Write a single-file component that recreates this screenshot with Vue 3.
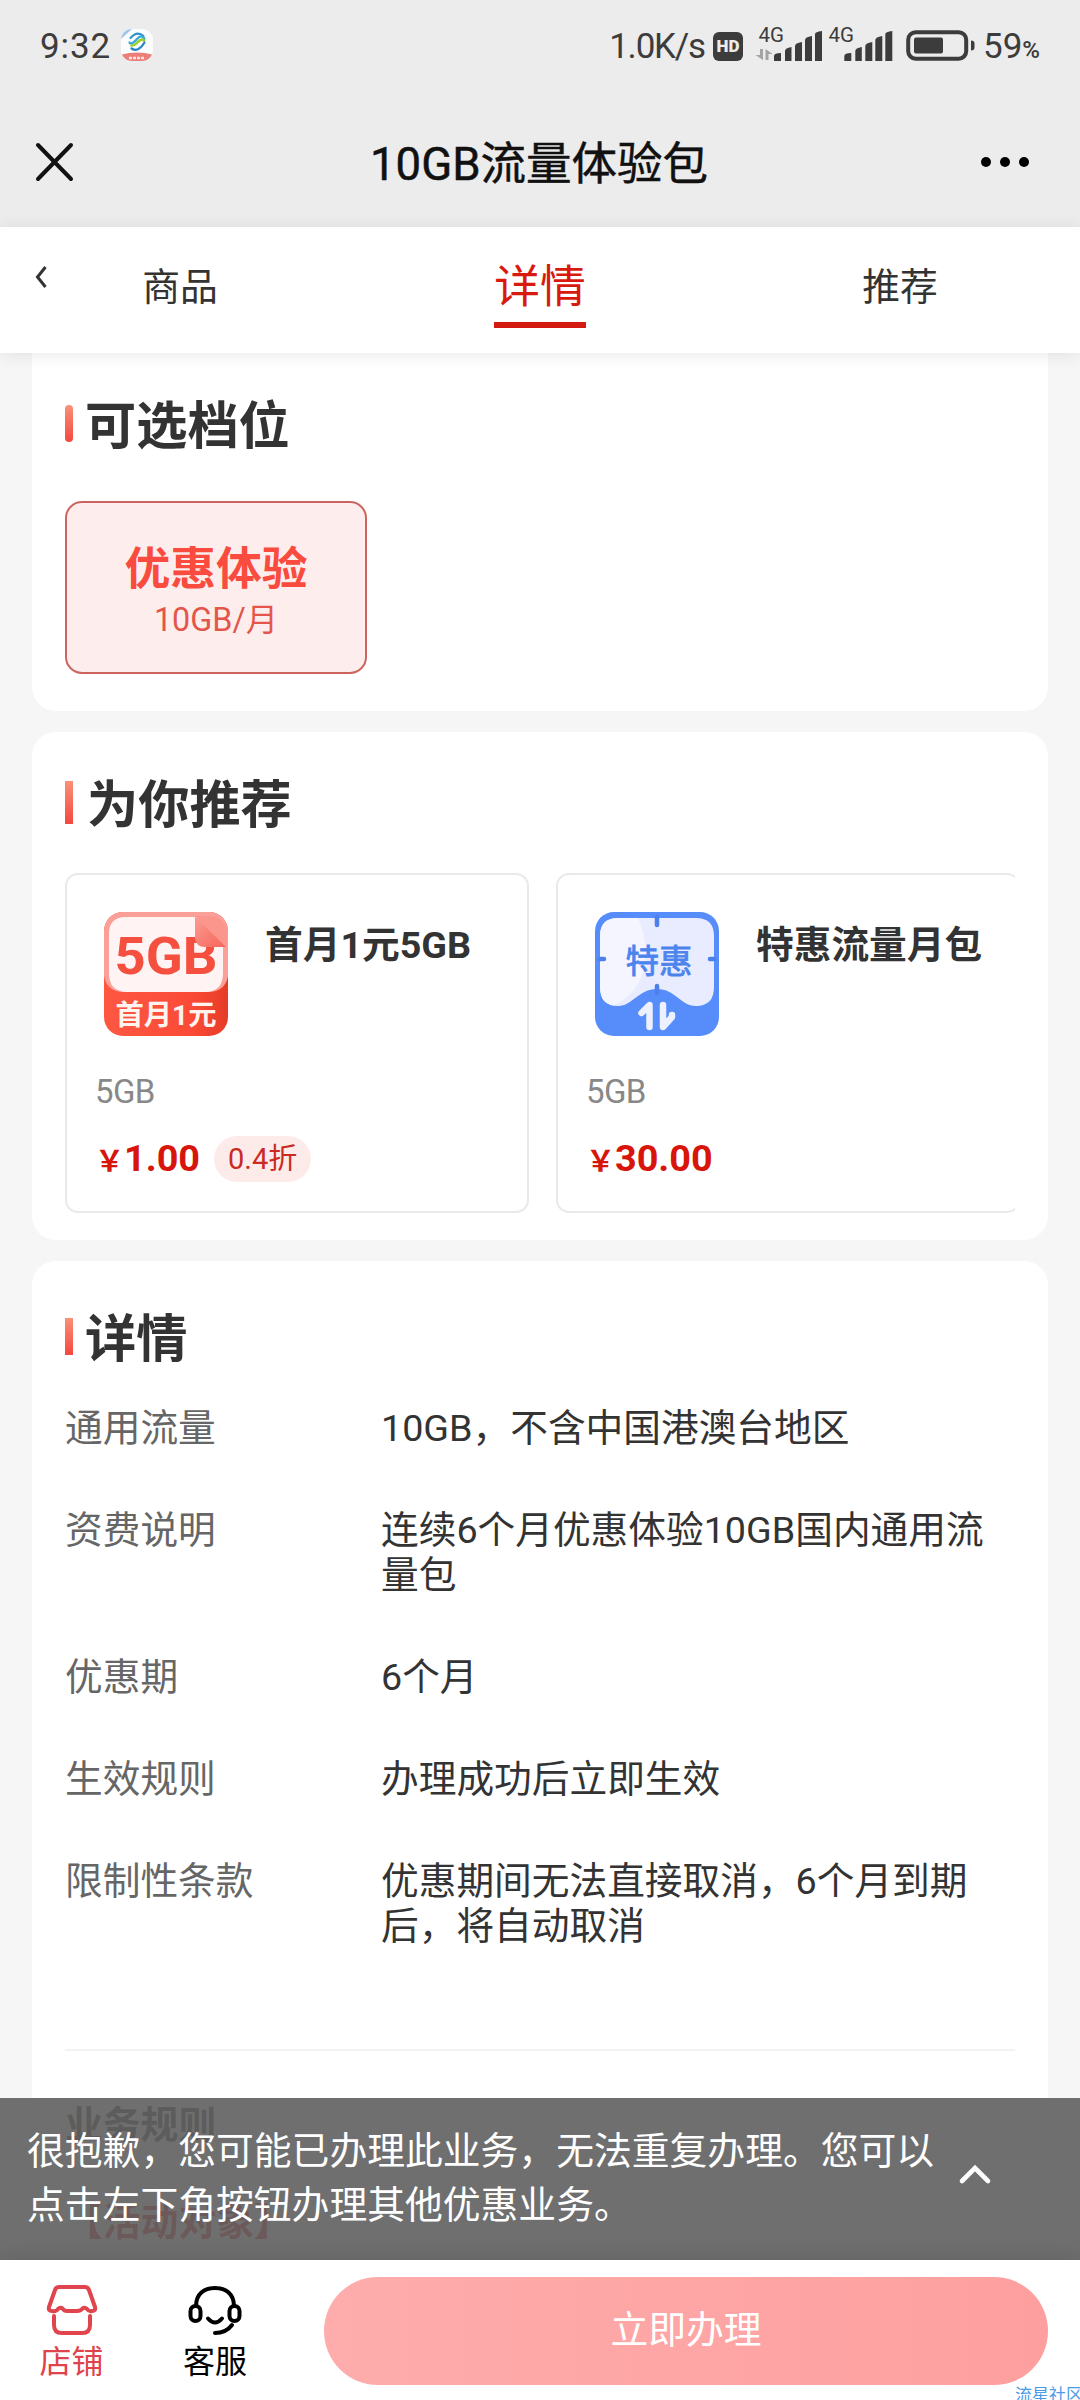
<script setup>
const tabs = [
  { name: '商品', active: false },
  { name: '详情', active: true },
  { name: '推荐', active: false },
]
const details = [
  { label: '通用流量', value: '10GB，不含中国港澳台地区' },
  { label: '资费说明', value: '连续6个月优惠体验10GB国内通用流量包' },
  { label: '优惠期', value: '6个月' },
  { label: '生效规则', value: '办理成功后立即生效' },
  { label: '限制性条款', value: '优惠期间无法直接取消，6个月到期后，将自动取消' },
]
</script>

<template>
  <div class="screen">
    <header class="top">
      <div class="status">
        <div class="status-left">
          <span class="clock">9:32</span>
          <svg class="app-dot" width="34" height="34" viewBox="0 0 34 34">
            <defs><clipPath id="dotClip"><rect x="1" y="1" width="32" height="32" rx="11" /></clipPath></defs>
            <g clip-path="url(#dotClip)">
              <rect width="34" height="34" fill="#fbfcfd" />
              <path d="M0 12 13 0h-6L0 6z" fill="#9cc4ea" />
              <path d="M0 27Q17 22 34 27V34H0z" fill="#ea7f7a" />
              <path d="M9 30h16" stroke="#fbe3e1" stroke-width="2.6" stroke-dasharray="3 1" />
            </g>
            <g fill="none" stroke-linecap="round">
              <path d="M10.500 10Q17 2.500 23.500 8" stroke="#2a93cf" stroke-width="2" />
              <path d="M9.500 14.500C10.500 17 14 14.500 17 11S23 7.500 24.500 11" stroke="#33a9dc" stroke-width="2.200" />
              <path d="M11.500 17.500C15 18 16 15.500 19 13S23 11.500 24 12.500" stroke="#9ccf2c" stroke-width="2.600" />
              <path d="M11.500 20.500Q18 25 24.500 14.500" stroke="#2a86c6" stroke-width="2.200" />
            </g>
          </svg>
        </div>
        <div class="status-right">
          <span class="speed">1.0K/s</span>
          <span class="hd">HD</span>
          <svg class="signals" width="140" height="40" viewBox="754 24 140 40">
            <g fill="#3c3c3c">
              <text x="758.500" y="42" class="net">4G</text>
              <text x="828.500" y="42" class="net">4G</text>
              <path id="bars" d="M774 61v-5q0-3 7-3v8zM785 61v-10q0-3 6.500-4v14zM795 61v-15q0-3 7-4v19zM805 61V40q0-3 7-4v25zM815 61V34q0-2 7-3v30z" />
              <use href="#bars" x="70.300" />
            </g>
            <path d="M763 49v11l-7.500-5h4.500v-6zM765.500 60V49l7 5h-4v6z" fill="#a3a3a3" />
          </svg>
          <svg class="battery" width="70" height="32" viewBox="0 0 70 32">
            <rect x="2.200" y="3.200" width="58" height="26.500" rx="7.500" fill="none" stroke="#3c3c3c" stroke-width="4" />
            <rect x="8" y="8.500" width="29" height="16" rx="2" fill="#3c3c3c" />
            <path d="M65 11.500q3.500 0 3.500 3v4q0 3-3.500 3z" fill="#3c3c3c" />
          </svg>
          <span class="percent">59<small>%</small></span>
        </div>
      </div>
      <div class="titlebar">
        <svg width="40" height="40" viewBox="0 0 40 40" stroke="#111" stroke-width="4" stroke-linecap="round">
          <path d="M3 3 36 37M36 3 3 37" />
        </svg>
        <h1>10GB流量体验包</h1>
        <svg width="50" height="12" viewBox="0 0 50 12"><circle cx="6" cy="6" r="5" /><circle cx="25" cy="6" r="5" /><circle cx="44" cy="6" r="5" /></svg>
      </div>
    </header>

    <nav class="tabs">
      <svg class="back" width="14" height="26" viewBox="0 0 14 26" fill="none" stroke="#333" stroke-width="3">
        <path d="M11.500 3 3.500 13l8 10" />
      </svg>
      <div v-for="t in tabs" :key="t.name" class="tab" :class="{ active: t.active }"><span>{{ t.name }}</span></div>
    </nav>

    <main class="content">
      <section class="card tiers">
        <h2><i class="mark round"></i>可选档位</h2>
        <div class="tier">
          <strong>优惠体验</strong>
          <span>10GB/月</span>
        </div>
      </section>

      <section class="card recommend">
        <h2><i class="mark tall"></i>为你推荐</h2>
        <div class="products">
          <article class="product">
            <div class="product-head">
              <svg width="124" height="124" viewBox="0 0 124 124">
                <defs>
                  <linearGradient id="redBase" x1="0" y1="0" x2="1" y2="0"><stop offset="0" stop-color="#fd5742" /><stop offset="0.700" stop-color="#fb4b37" /><stop offset="1" stop-color="#e63c27" /></linearGradient>
                  <linearGradient id="fold" x1="0" y1="0" x2="1" y2="1"><stop offset="0" stop-color="#fb9c93" /><stop offset="1" stop-color="#f7655a" /></linearGradient>
                  <clipPath id="redClip"><rect width="124" height="124" rx="19" /></clipPath>
                </defs>
                <g clip-path="url(#redClip)">
                  <rect width="124" height="124" fill="url(#redBase)" />
                  <path d="M0 0h124v64q-3 16-20 16H20Q3 80 0 64z" fill="#fba098" />
                  <path d="M5 22Q5 5 22 5h70l27 30v26q0 19-18 19H23Q5 80 5 61z" fill="#fff4f3" />
                </g>
                <text x="62" y="61.500" text-anchor="middle" class="ico-gb" textLength="103" lengthAdjust="spacingAndGlyphs">5GB</text>
                <path d="M91 4v22q1 9 10 9h21z" fill="url(#fold)" />
                <path d="M91 4h17q14 3 15 15v16z" fill="#fb968d" />
                <text x="62" y="113" text-anchor="middle" class="ico-first">首月1元</text>
              </svg>
              <h3>首月1元5GB</h3>
            </div>
            <p class="amount">5GB</p>
            <div class="price"><small>￥</small><b>1.00</b><em>0.4折</em></div>
          </article>
          <article class="product">
            <div class="product-head">
              <svg width="124" height="124" viewBox="0 0 124 124">
                <defs><clipPath id="ticket"><path d="M5 24Q5 6 23 6h78q18 0 18 18v51q0 19-18 19c-16 0-20-17-39-17S38 94 23 94Q5 94 5 75z" /></clipPath></defs>
                <rect width="124" height="124" rx="19" fill="#568dfb" />
                <g clip-path="url(#ticket)">
                  <rect width="124" height="100" fill="#e9ebfe" />
                  <path d="M0 0h40q16 30 8 60T0 100z" fill="#f4f5fe" />
                </g>
                <path d="M62 5v8M62 74v7M5 47h4M115 47h4" stroke="#4c80ea" stroke-width="4.500" stroke-linecap="round" />
                <text x="64" y="61" text-anchor="middle" class="ico-deal">特惠</text>
                <path d="M54.500 115V93l-8 8M68 93v22l9-10v-2" fill="none" stroke="#edf0ff" stroke-width="6.500" stroke-linecap="round" stroke-linejoin="round" />
              </svg>
              <h3>特惠流量月包</h3>
            </div>
            <p class="amount">5GB</p>
            <div class="price"><small>￥</small><b>30.00</b></div>
          </article>
        </div>
      </section>

      <section class="card detail">
        <h2><i class="mark"></i>详情</h2>
        <dl>
          <div v-for="d in details" :key="d.label" class="row">
            <dt>{{ d.label }}</dt>
            <dd>{{ d.value }}</dd>
          </div>
        </dl>
        <div class="rules">
          <p class="rules-title">业务规则</p>
          <p class="rules-target">【活动对象】</p>
        </div>
      </section>
    </main>

    <footer class="bottom">
      <div class="toast">
        <p>很抱歉，您可能已办理此业务，无法重复办理。您可以点击左下角按钮办理其他优惠业务。</p>
        <svg width="34" height="22" viewBox="0 0 34 22" fill="none" stroke="#fff" stroke-width="4.600" stroke-linecap="round">
          <path d="M4 18 17 5l13 13" />
        </svg>
      </div>
      <div class="bar">
        <div class="item shop">
          <svg width="56" height="56" viewBox="0 0 56 56" fill="none" stroke="#e0444c" stroke-width="4" stroke-linecap="round" stroke-linejoin="round">
            <path d="M15 5h26q3 0 4 3l6 17q1 4-3 4-3 1-5-2-2-2-4-1-2 3-6 3H23q-3 0-5-3-2-1-4 1-2 3-6 2-4 0-3-4l6-17q1-3 4-3z" />
            <path d="M10 34v9q0 8 8 8h20q8 0 8-8v-9" />
          </svg>
          <span>店铺</span>
        </div>
        <div class="item">
          <svg width="56" height="56" viewBox="0 0 56 56" fill="none" stroke="#000" stroke-width="4" stroke-linecap="round">
            <path d="M9 24C9 12 17 6 28 6s19 6 19 18" />
            <rect x="3.500" y="24" width="10" height="15" rx="5" />
            <rect x="42.500" y="24" width="10" height="15" rx="5" />
            <path d="M21 36.500q7 8 14 0M45 43q-6 8-17 8" />
          </svg>
          <span>客服</span>
        </div>
        <button>立即办理</button>
      </div>
      <span class="watermark">流星社区</span>
    </footer>
  </div>
</template>

<style>
body { margin: 0; }
</style>

<style scoped>
* { box-sizing: border-box; }
h1, h2, h3, p, dl, dd { margin: 0; }
svg { display: block; flex: none; }
.screen {
  width: 1080px; height: 2400px; overflow: hidden; position: relative;
  display: flex; flex-direction: column; background: #f6f6f6; color: #333;
  font-family: Roboto, "Noto Sans CJK SC", sans-serif;
}
.top { height: 227px; background: #ececec; flex: none; }
.status {
  height: 92px; padding: 0 40px 0 40px; display: flex; align-items: center; justify-content: space-between;
  color: #3c3c3c; font-size: 35px;
}
.status-left, .status-right { display: flex; align-items: center; }
.clock { letter-spacing: 0.9px; }
.speed { letter-spacing: -1.2px; }
.app-dot { margin-left: 9px; margin-top: -2px; }
.hd {
  width: 30px; height: 29px; margin-left: 8px; border-radius: 6px; background: #3c3c3c; color: #ececec;
  font: 900 17px/29px Roboto, sans-serif; text-align: center;
}
.signals { margin-left: 11px; margin-top: -4px; }
.net { font: 400 20.500px Roboto, sans-serif; }
.battery { margin-left: 12px; margin-top: -2px; }
.percent { margin-left: 7px; white-space: nowrap; }
.percent small { font-size: 24px; font-weight: 500; margin-left: 0; }
.titlebar { height: 135px; padding: 5px 50px 0 35px; display: flex; align-items: center; justify-content: space-between; }
.titlebar h1 { margin-left: 23px; padding-top: 5px; font-size: 45.500px; font-weight: 400; color: #111; line-height: 60px; -webkit-text-stroke: 0.5px #111; }
.tabs {
  height: 126px; flex: none; display: flex; background: #fff; position: relative; z-index: 2;
  box-shadow: 0 2px 16px rgba(0, 0, 0, 0.09);
}
.back { position: absolute; left: 34px; top: 37px; }
.tab { flex: 1; text-align: center; font-size: 37.800px; line-height: 60px; padding-top: 30px; }
.tab span { display: inline-block; height: 75px; }
.tab.active { color: #d81a0e; font-size: 45.800px; padding-top: 31px; }
.tab.active span { height: 70px; border-bottom: 6px solid #d21a10; }
.content { padding: 0 32px; flex: 1; min-height: 0; overflow: hidden; }
.card { background: #fff; border-radius: 24px; padding: 0 33px; margin-bottom: 21px; }
h2 { display: flex; align-items: center; font-size: 51.200px; line-height: 60px; font-weight: 700; }
.mark { width: 8px; height: 37px; margin-right: 12px; background: linear-gradient(#fa9078, #f4483d); transform: translateY(-4px); }
.mark.round { border-radius: 4px; }
.mark.tall { height: 43px; margin-right: 14px; }
.tiers { height: 358px; padding-top: 44px; border-top-left-radius: 0; border-top-right-radius: 0; }
.tier {
  width: 302px; height: 173px; margin-top: 44px; border: 2px solid #cc655f; border-radius: 17px; background: #fdeeed;
  display: flex; flex-direction: column; align-items: center; padding-top: 38px; color: #f94b3e;
}
.tier strong { font-size: 45.800px; line-height: 58px; }
.tier span { font-size: 32.300px; line-height: 40px; margin-top: 1px; color: #e4564b; }
.recommend { height: 508px; padding-top: 44px; }
.products { display: flex; gap: 27px; margin-top: 37px; width: 950px; overflow: hidden; }
.product { width: 464px; height: 340px; flex: none; border: 2px solid #e9e9e9; border-radius: 13px; padding: 37px 28px 0; }
.product-head { display: flex; padding-left: 9px; }
.product h3 { margin-left: 37px; margin-top: 5px; font-size: 37.700px; line-height: 56px; white-space: nowrap; }
.amount { margin-top: 34px; font-size: 33px; line-height: 44px; color: #888; letter-spacing: -0.6px; }
.price { display: flex; align-items: center; height: 46px; margin-top: 22px; color: #d7150b; }
.price small { font-size: 29px; font-weight: 700; width: 29px; }
.price b { font-size: 37.800px; line-height: 42px; padding-bottom: 2px; }
.price em { font-style: normal; font-size: 29px; line-height: 46px; padding: 0 14px; border-radius: 23px; background: #fdebea; color: #cb2a22; margin-left: 14px; }
.detail { padding-top: 49px; height: 1160px; margin: 0; }
.detail dl { margin-top: 36px; }
.row { display: flex; margin-bottom: 57px; font-size: 37.700px; line-height: 45px; }
dt { width: 316px; flex: none; color: #666; }
dd { flex: 1; }
.rules { margin-top: 100px; border-top: 2px solid #f3f3f3; font-size: 37.800px; font-weight: 700; line-height: 56px; }
.rules-title { margin-top: 46px; }
.rules-target { margin-top: 41px; color: #d7150b; }
.ico-gb { font: 700 51px Roboto, sans-serif; fill: #f5503f; }
.ico-first { font: 700 28.300px Roboto, "Noto Sans CJK SC", sans-serif; fill: #fff3ef; }
.ico-deal { font: 400 33.500px "Noto Sans CJK SC", sans-serif; fill: #4c84ee; stroke: #4c84ee; stroke-width: 0.8px; }
.bottom { position: absolute; left: 0; right: 0; bottom: 0; z-index: 3; }
.toast {
  height: 162px; background: rgba(97, 97, 97, 0.91); color: #fff; display: flex; align-items: center; padding: 0 0 0 27px;
  font-size: 37.800px; line-height: 54px;
}
.toast p { width: 915px; padding-bottom: 2px; }
.toast svg { margin-left: 15.500px; margin-top: -10px; }
.bar { height: 140px; background: #fff; display: flex; padding-right: 32px; position: relative; box-shadow: 0 -3px 20px rgba(0, 0, 0, 0.1); }
.item { width: 143px; display: flex; flex-direction: column; align-items: center; font-size: 32px; line-height: 40px; color: #000; padding-top: 22px; }
.item svg { margin-bottom: 4px; }
.item.shop { color: #df434b; }
.item:nth-child(2) { width: 144px; }
.bar button {
  flex: 1; height: 108px; margin: 17px 0 0 37px; padding: 0 0 9px; border: 0; border-radius: 54px; color: #fff; font: inherit; font-size: 37.800px;
  background: linear-gradient(90deg, #feacac, #fe9f9f);
}
.watermark { position: absolute; right: -3px; bottom: -7px; font-size: 17px; line-height: 24px; color: #4a9be8; white-space: nowrap; }
</style>
